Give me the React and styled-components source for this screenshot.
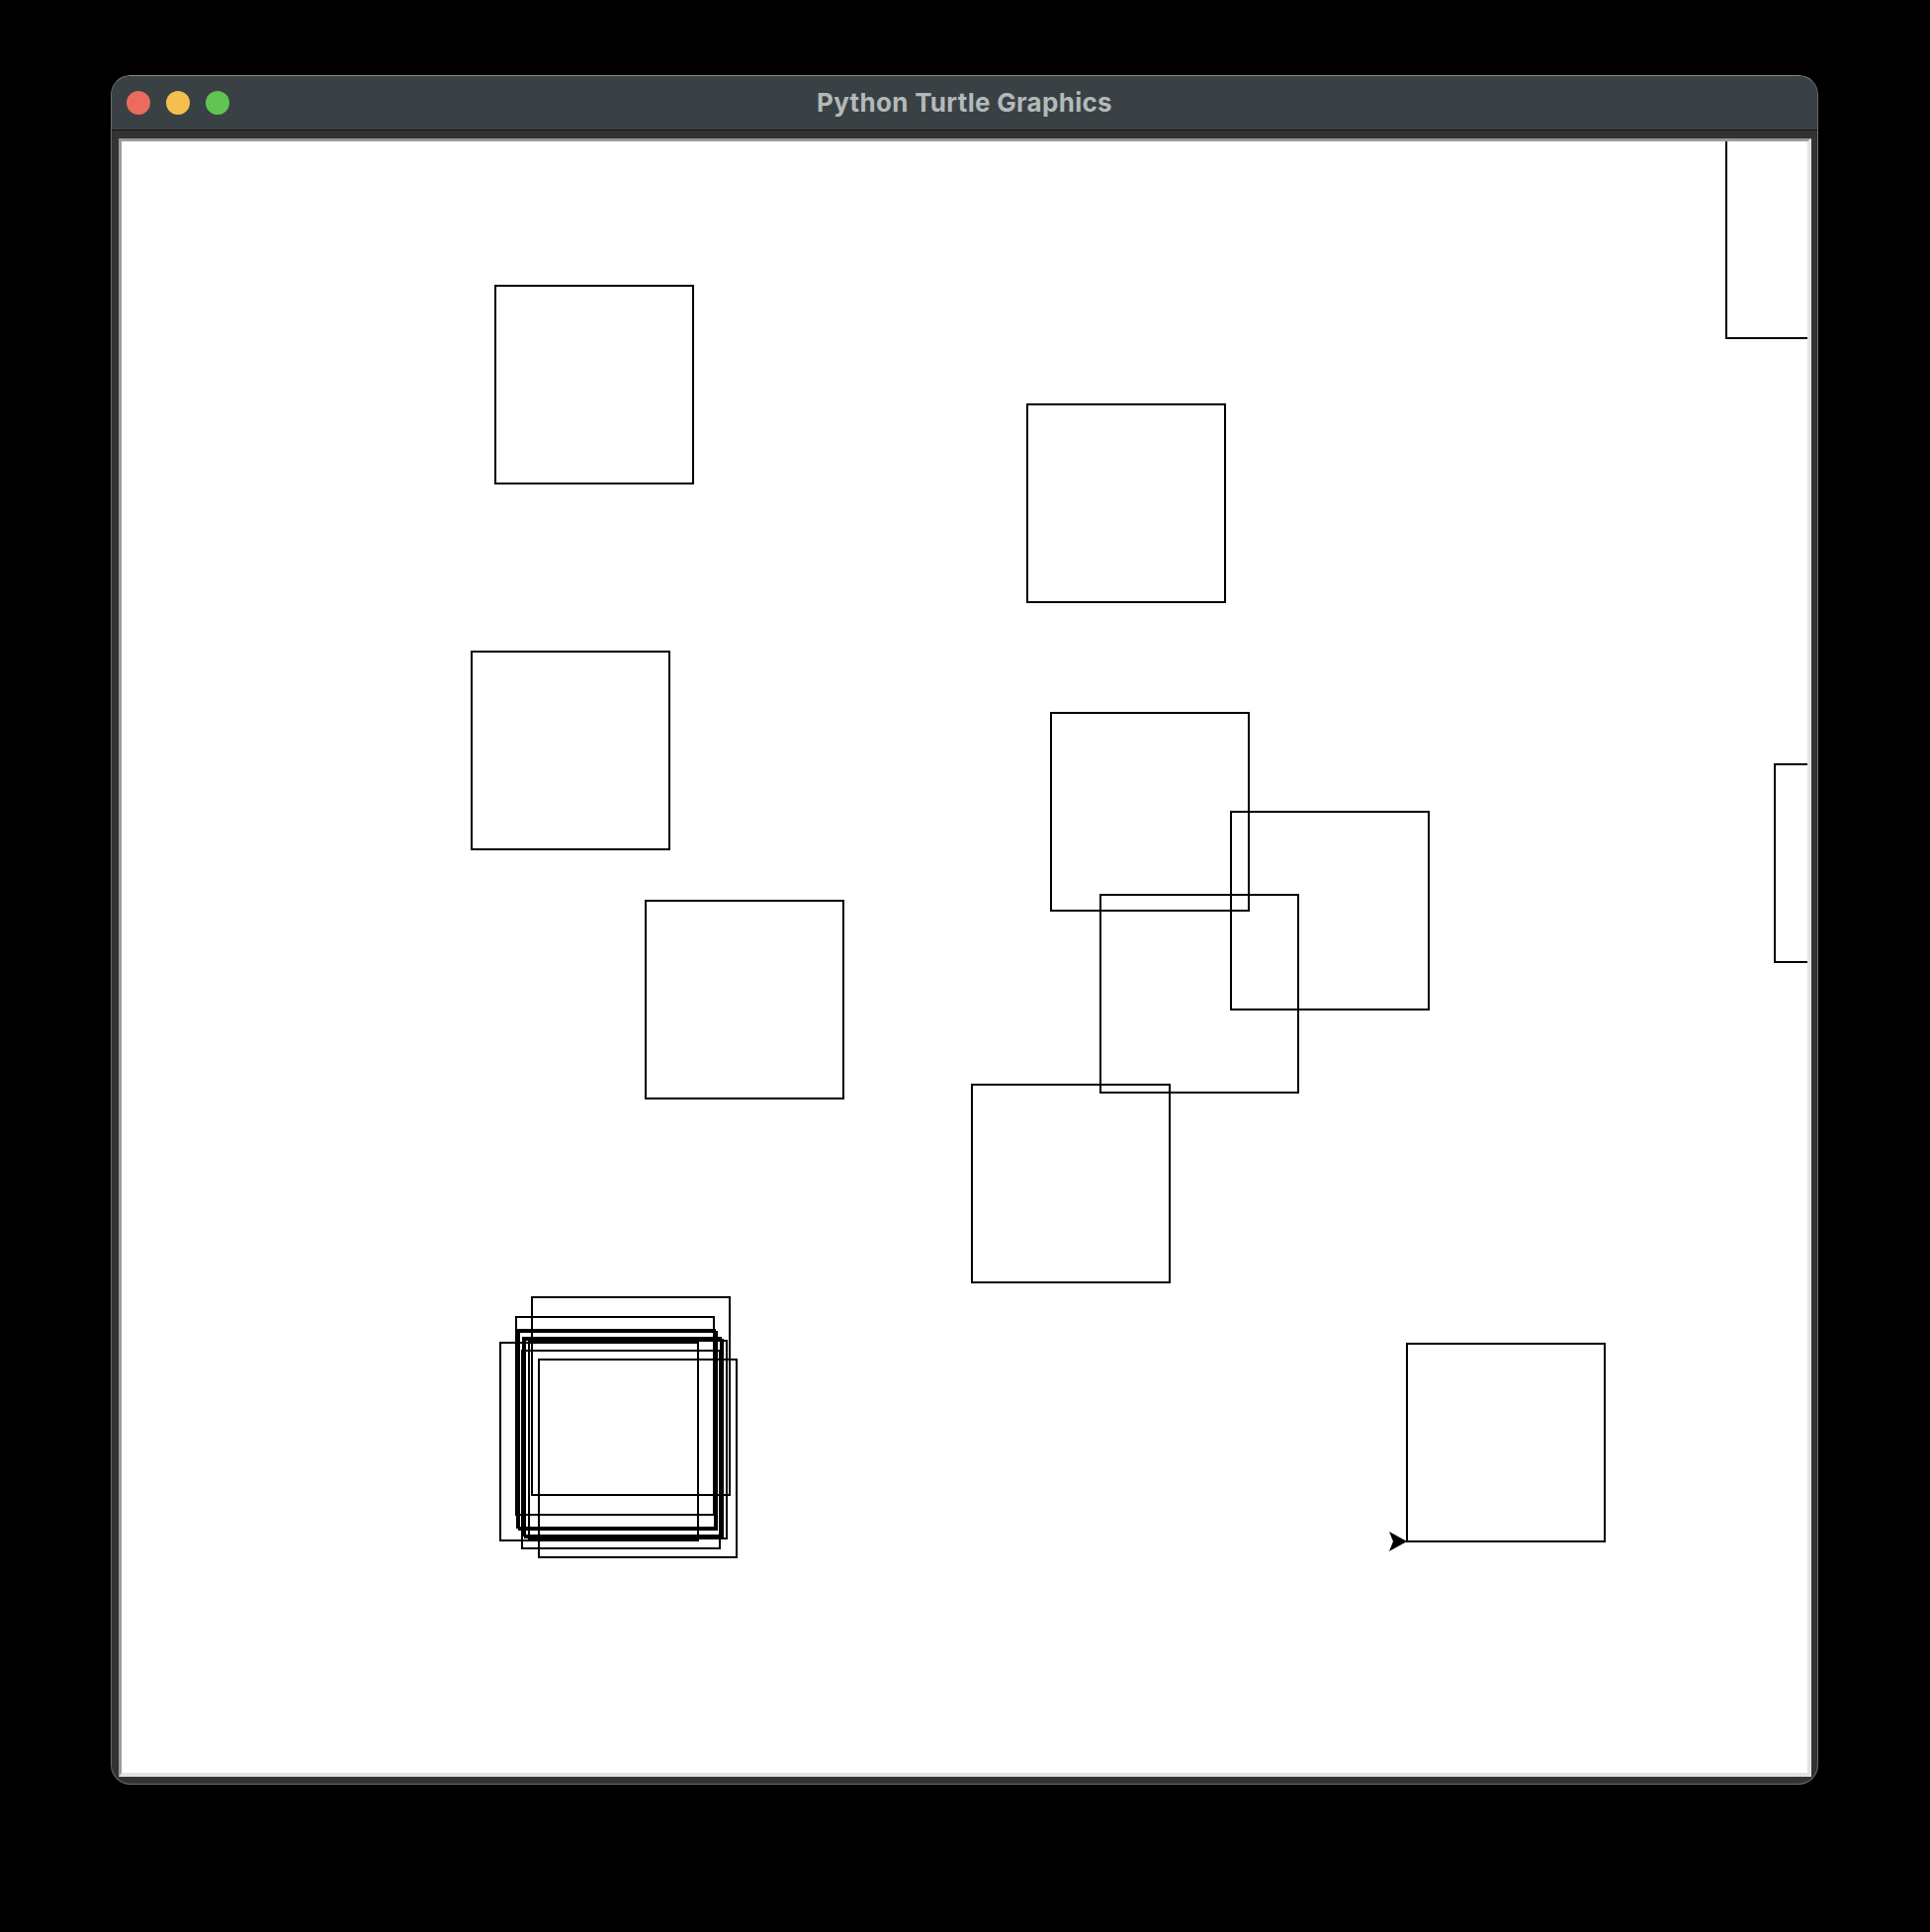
import styled, { createGlobalStyle } from "styled-components";

const GlobalStyle = createGlobalStyle`
    html, body {
        margin: 0;
        padding: 0;
        background: #000;
    }
    #root {
        min-height: 1954px;
    }
`;

const Desktop = styled.div`
    width: 1952px;
    min-height: 1954px;
    background: #000;
    padding: 76px 0 0 112px;
    box-sizing: border-box;
`;

const Window = styled.div`
    width: 1727px;
    box-sizing: border-box;
    border: 1px solid #6a6a6a;
    border-top-color: #8a8a8a;
    border-radius: 20px;
    background: #333333;
    overflow: hidden;
`;

const TitleBar = styled.div`
    position: relative;
    height: 54px;
    background: #3a4144;
    border-bottom: 1px solid #141414;
    display: flex;
    align-items: center;
    justify-content: center;
`;

const Lights = styled.div`
    position: absolute;
    left: 15px;
    top: 0;
    bottom: 0;
    display: flex;
    align-items: center;
    gap: 16px;
`;

const Light = styled.span`
    width: 24px;
    height: 24px;
    border-radius: 50%;
    background: ${(p) => p.color};
`;

const Title = styled.div`
    font-family: Inter, "Liberation Sans", sans-serif;
    font-weight: 700;
    font-size: 26px;
    color: #b3b9bb;
    letter-spacing: 0.3px;
    margin-top: -2px;
`;

const Body = styled.div`
    padding: 8px 6px 7px 7px;
`;

const CanvasFrame = styled.div`
    border-style: solid;
    border-width: 3px 4px 4px 3px;
    border-color: #9a9a9a #e3e3e3 #e3e3e3 #9a9a9a;
    background: #fff;
    height: 1650px;
    overflow: hidden;
`;

const Drawing = styled.svg`
    display: block;
    width: 1705px;
    height: 1650px;
`;

// top-left pixel of each square's stroke, in page coordinates
const squares = [
    [500, 288],
    [1038, 408],
    [476, 658],
    [1062, 720],
    [1244, 820],
    [1112, 904],
    [652, 910],
    [982, 1096],
    [1422, 1358],
    [1745, 141],
    [1794, 772],
    // the pile on the bottom left
    [537, 1311],
    [521, 1331],
    [505, 1357],
    [544, 1374],
    [527, 1365],
    [522, 1344],
    [524, 1346],
    [528, 1352],
    [530, 1354],
    [534, 1355],
];

const OX = 123;
const OY = 143;

function TurtleCanvas() {
    const tipX = 1423 - OX;
    const tipY = 1559 - OY;
    return (
        <Drawing viewBox="0 0 1705 1650">
            {squares.map(([x, y], i) => (
                <rect
                    key={i}
                    x={x - OX + 1}
                    y={y - OY + 1}
                    width={200}
                    height={200}
                    fill="none"
                    stroke="#000"
                    strokeWidth={2}
                />
            ))}
            <polygon
                points={`${tipX},${tipY} ${tipX - 18},${tipY - 10} ${tipX - 14},${tipY} ${tipX - 18},${tipY + 10}`}
                fill="#000"
            />
        </Drawing>
    );
}

function App() {
    return (
        <>
            <GlobalStyle />
            <Desktop>
                <Window>
                    <TitleBar>
                        <Lights>
                            <Light color="#ed6a5e" />
                            <Light color="#f5bf4f" />
                            <Light color="#61c554" />
                        </Lights>
                        <Title>Python Turtle Graphics</Title>
                    </TitleBar>
                    <Body>
                        <CanvasFrame>
                            <TurtleCanvas />
                        </CanvasFrame>
                    </Body>
                </Window>
            </Desktop>
        </>
    );
}

export default App;
